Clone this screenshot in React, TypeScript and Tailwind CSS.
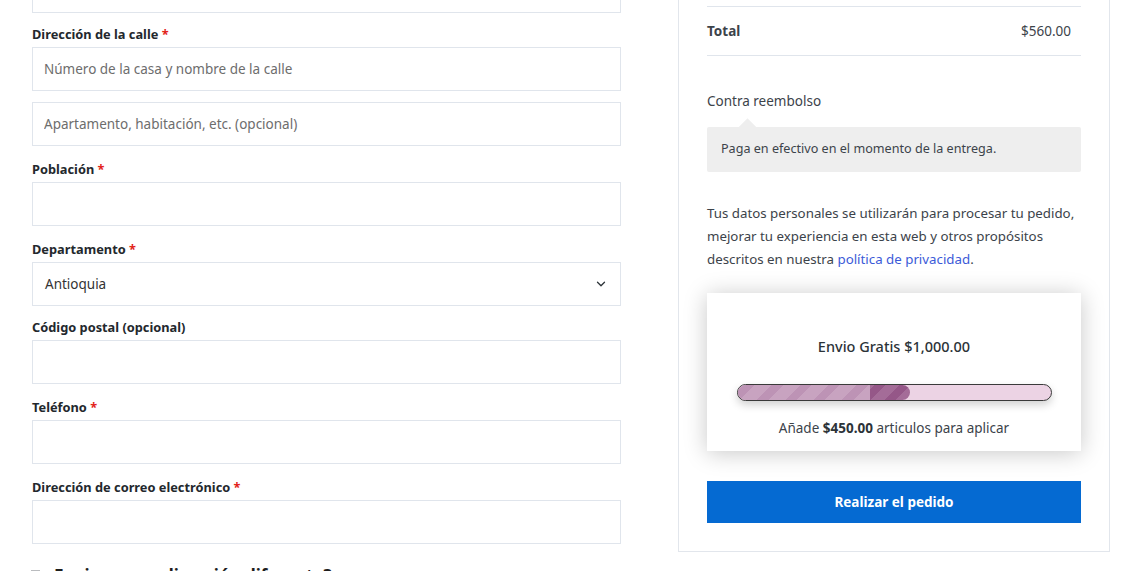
import { ChevronDown } from "lucide-react";

const font = { fontFamily: '"Noto Sans", "Open Sans", sans-serif' };

function Label({ text, required = true }: { text: string; required?: boolean }) {
  return (
    <label className="block h-[20px] text-[12.8px] leading-[20px] font-bold text-[#23282d] mb-[3px]">
      {text}
      {required && <span className="text-[#e2231a]"> *</span>}
    </label>
  );
}

function Input({ placeholder = "" }: { placeholder?: string }) {
  return (
    <input
      className="block w-full h-[44px] border border-[#e0e5ec] bg-white px-[11px] text-[13.5px] text-[#333] placeholder:text-[#6d6d6d] outline-none"
      placeholder={placeholder}
      readOnly
    />
  );
}

export default function App() {
  return (
    <div style={font} className="w-full h-[571px] overflow-hidden bg-white flex items-start">
      {/* billing form */}
      <div className="ml-[32px] w-[589px] shrink-0">
        <div className="-mt-[31px]">
          <Input />
        </div>

        <div className="mt-[11px]">
          <Label text="Dirección de la calle" />
          <Input placeholder="Número de la casa y nombre de la calle" />
          <div className="mt-[11px]">
            <Input placeholder="Apartamento, habitación, etc. (opcional)" />
          </div>
        </div>

        <div className="mt-[13px]">
          <Label text="Población" />
          <Input />
        </div>

        <div className="mt-[13px]">
          <Label text="Departamento" />
          <div className="relative h-[44px] border border-[#e0e5ec] flex items-center px-[12px] text-[13.5px] text-[#333]">
            Antioquia
            <ChevronDown className="absolute right-[12px] top-[14px] h-[14px] w-[14px] text-[#2c3338]" strokeWidth={2.2} />
          </div>
        </div>

        <div className="mt-[11px]">
          <Label text="Código postal (opcional)" required={false} />
          <Input />
        </div>

        <div className="mt-[13px]">
          <Label text="Teléfono" />
          <Input />
        </div>

        <div className="mt-[13px]">
          <Label text="Dirección de correo electrónico" />
          <Input />
        </div>

        <div className="mt-[21px] flex items-start gap-[6px]">
          <span className="mt-[5px] -ml-[1px] h-[14px] w-[9px] bg-[#8c8f94] opacity-60 block" />
          <span className="text-[17px] font-bold text-[#1e1e1e] leading-[22px]">
            ¿Enviar a una dirección diferente?
          </span>
        </div>
      </div>

      {/* order review */}
      <div className="ml-[57px] w-[432px] shrink-0 border-x border-b border-[#e2e6ec] px-[28px] pt-[6px] pb-[28px] text-[#333]">
        <div className="h-[50px] border-y border-[#e0e5ec] flex items-center justify-between pr-[10px]">
          <span className="font-bold text-[#3c434a] text-[13.5px]">Total</span>
          <span className="text-[#3c434a] text-[13.5px]">$560.00</span>
        </div>

        <div className="mt-[35px] text-[13.5px] leading-[20px] text-[#3c434a]">Contra reembolso</div>

        <div className="relative mt-[16px] h-[45px] bg-[#eeeeee] rounded-[2px] flex items-center pl-[14px] text-[12.6px] text-[#3c434a]">
          <span className="absolute -top-[6px] left-[34px] h-[13px] w-[13px] rotate-45 bg-[#eeeeee]" />
          <span className="relative">Paga en efectivo en el momento de la entrega.</span>
        </div>

        <p className="mt-[30px] text-[13.3px] leading-[23px] text-[#3c434a]">
          Tus datos personales se utilizarán para procesar tu pedido, mejorar tu experiencia en esta web y otros
          propósitos descritos en nuestra <a className="text-[#3b5ad8]">política de privacidad</a>.
        </p>

        <div className="mt-[22px] h-[158px] bg-white shadow-[0_2px_22px_rgba(0,0,0,0.22)] flex flex-col items-center pt-[42px]">
          <div className="text-[14.5px] leading-[22px] font-medium text-[#2c3338]">Envio Gratis $1,000.00</div>
          <div className="mt-[27px] w-[315px] h-[17px] rounded-full border border-[#3a3a3a] bg-[#ecd3e4] overflow-hidden shadow-[0_4px_8px_rgba(0,0,0,0.18)] flex">
            <div className="h-full w-[172px] rounded-r-full overflow-hidden flex">
              <div className="h-full w-[132px] bg-[repeating-linear-gradient(-45deg,#c8a3c0_0px,#c8a3c0_12px,#bd93b5_12px,#bd93b5_20px)]" />
              <div className="h-full flex-1 bg-[repeating-linear-gradient(-45deg,#a46c98_0px,#a46c98_10px,#955788_10px,#955788_18px)]" />
            </div>
          </div>
          <div className="mt-[17px] text-[13.5px] leading-[20px] text-[#3c434a]">
            Añade <b className="text-[#2c3338]">$450.00</b> articulos para aplicar
          </div>
        </div>

        <button className="mt-[30px] w-full h-[42px] bg-[#056ad2] text-white text-[13.5px] font-bold">
          Realizar el pedido
        </button>
      </div>
    </div>
  );
}
